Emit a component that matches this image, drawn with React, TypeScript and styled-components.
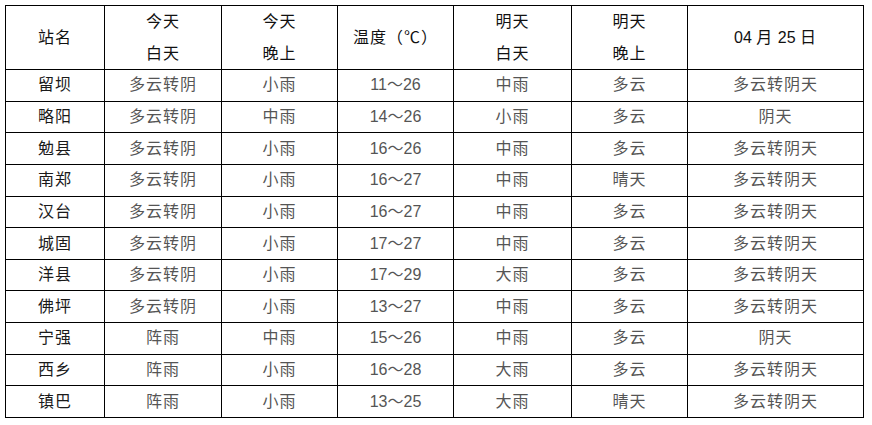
import React from "react";
import styled, { createGlobalStyle } from "styled-components";

type Row = {
	name: string;
	todayDay: string;
	todayNight: string;
	temp: string;
	tomorrowDay: string;
	tomorrowNight: string;
	after: string;
};

const rows: Row[] = [
	{ name: "留坝", todayDay: "多云转阴", todayNight: "小雨", temp: "11～26", tomorrowDay: "中雨", tomorrowNight: "多云", after: "多云转阴天" },
	{ name: "略阳", todayDay: "多云转阴", todayNight: "中雨", temp: "14～26", tomorrowDay: "小雨", tomorrowNight: "多云", after: "阴天" },
	{ name: "勉县", todayDay: "多云转阴", todayNight: "小雨", temp: "16～26", tomorrowDay: "中雨", tomorrowNight: "多云", after: "多云转阴天" },
	{ name: "南郑", todayDay: "多云转阴", todayNight: "小雨", temp: "16～27", tomorrowDay: "中雨", tomorrowNight: "晴天", after: "多云转阴天" },
	{ name: "汉台", todayDay: "多云转阴", todayNight: "小雨", temp: "16～27", tomorrowDay: "中雨", tomorrowNight: "多云", after: "多云转阴天" },
	{ name: "城固", todayDay: "多云转阴", todayNight: "小雨", temp: "17～27", tomorrowDay: "中雨", tomorrowNight: "多云", after: "多云转阴天" },
	{ name: "洋县", todayDay: "多云转阴", todayNight: "小雨", temp: "17～29", tomorrowDay: "大雨", tomorrowNight: "多云", after: "多云转阴天" },
	{ name: "佛坪", todayDay: "多云转阴", todayNight: "小雨", temp: "13～27", tomorrowDay: "中雨", tomorrowNight: "多云", after: "多云转阴天" },
	{ name: "宁强", todayDay: "阵雨", todayNight: "中雨", temp: "15～26", tomorrowDay: "中雨", tomorrowNight: "多云", after: "阴天" },
	{ name: "西乡", todayDay: "阵雨", todayNight: "小雨", temp: "16～28", tomorrowDay: "大雨", tomorrowNight: "多云", after: "多云转阴天" },
	{ name: "镇巴", todayDay: "阵雨", todayNight: "小雨", temp: "13～25", tomorrowDay: "大雨", tomorrowNight: "晴天", after: "多云转阴天" },
];

const colWidths = [99, 117, 116, 116, 118, 116, 176];

const GlobalStyle = createGlobalStyle`
	html, body {
		margin: 0;
		padding: 0;
		background: #ffffff;
	}
	body {
		font-family: "Liberation Sans", "Noto Sans CJK SC", sans-serif;
	}
`;

const Page = styled.div`
	padding: 5px 0 0 5px;
	background: #ffffff;
`;

const Table = styled.table`
	border-collapse: collapse;
	table-layout: fixed;
	width: 859px;
	font-size: 16px;
`;

const HeadRow = styled.tr`
	height: 63px;
`;

const BodyRow = styled.tr`
	height: 31.65px;
`;

const HeadCell = styled.th`
	border: 1px solid #000;
	padding: 0;
	font-weight: normal;
	color: #111;
	line-height: 31.5px;
	text-align: center;
	vertical-align: middle;
	letter-spacing: 1px;
`;

const Cell = styled.td<{ $dark?: boolean; $latin?: boolean }>`
	border: 1px solid #000;
	padding: 0;
	text-align: center;
	vertical-align: middle;
	line-height: 30px;
	color: ${({ $dark }) => ($dark ? "#1a1a1a" : "#555")};
	letter-spacing: ${({ $latin }) => ($latin ? "0" : "1px")};
`;

const Latin = styled.span`
	letter-spacing: 0;
`;

export default function App() {
	return (
		<>
			<GlobalStyle />
			<Page>
				<Table>
					<colgroup>
						{colWidths.map((w, i) => (
							<col key={i} style={{ width: w }} />
						))}
					</colgroup>
					<thead>
						<HeadRow>
							<HeadCell>站名</HeadCell>
							<HeadCell>
								今天
								<br />
								白天
							</HeadCell>
							<HeadCell>
								今天
								<br />
								晚上
							</HeadCell>
							<HeadCell>温度（℃）</HeadCell>
							<HeadCell>
								明天
								<br />
								白天
							</HeadCell>
							<HeadCell>
								明天
								<br />
								晚上
							</HeadCell>
							<HeadCell>
								<Latin>04 </Latin>月<Latin> 25 </Latin>日
							</HeadCell>
						</HeadRow>
					</thead>
					<tbody>
						{rows.map((r) => (
							<BodyRow key={r.name}>
								<Cell $dark>{r.name}</Cell>
								<Cell>{r.todayDay}</Cell>
								<Cell>{r.todayNight}</Cell>
								<Cell $latin>{r.temp}</Cell>
								<Cell>{r.tomorrowDay}</Cell>
								<Cell>{r.tomorrowNight}</Cell>
								<Cell>{r.after}</Cell>
							</BodyRow>
						))}
					</tbody>
				</Table>
			</Page>
		</>
	);
}
